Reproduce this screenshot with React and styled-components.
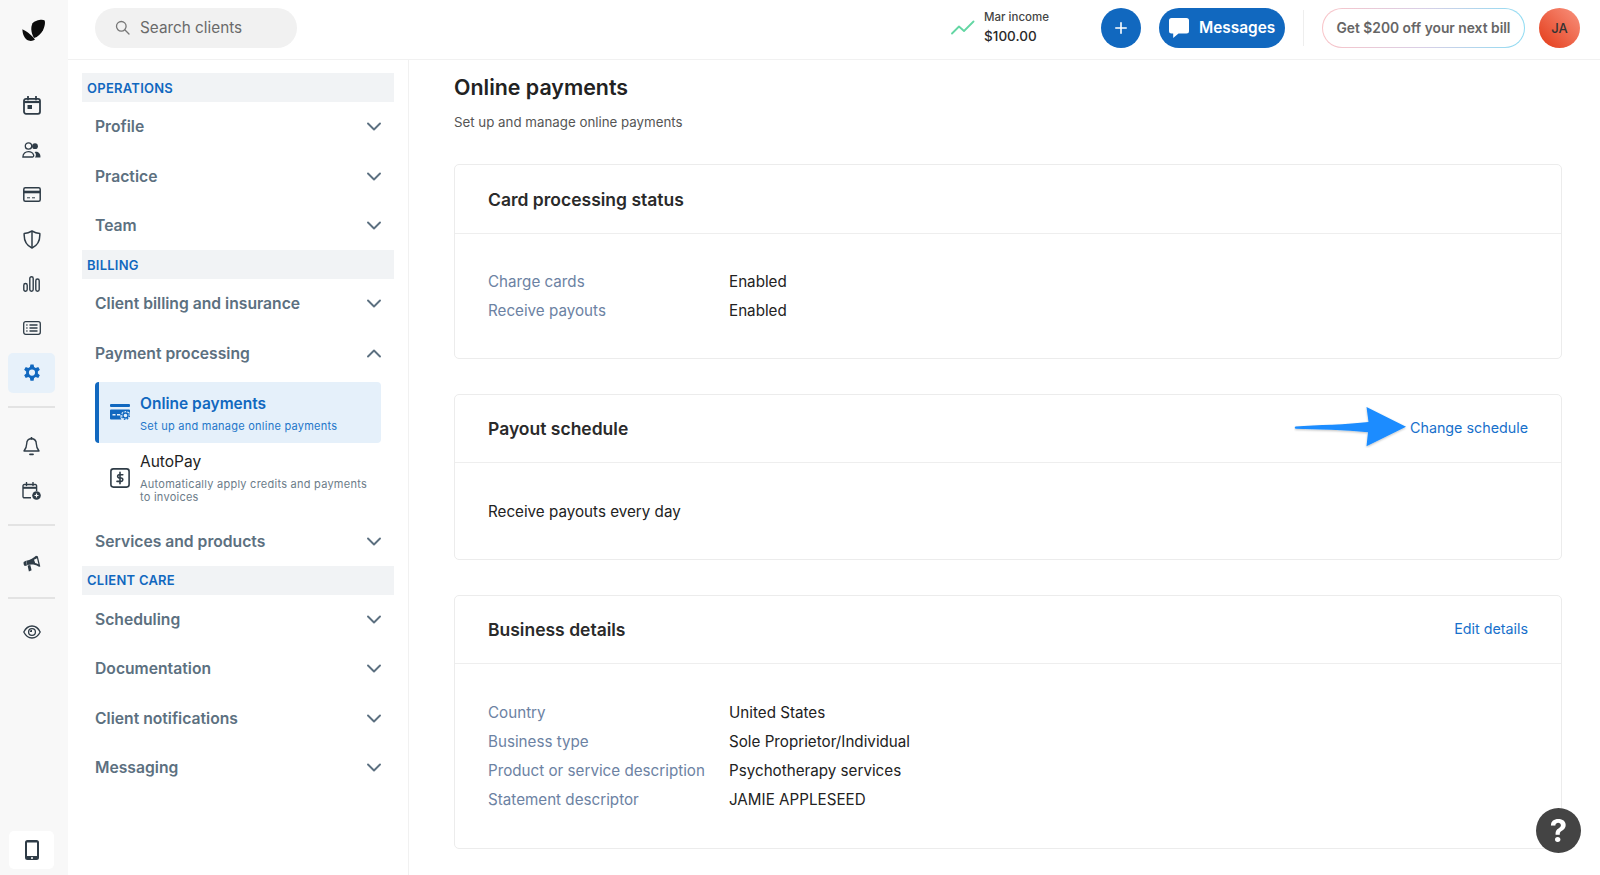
import React from 'react';
import styled, { createGlobalStyle } from 'styled-components';

const GlobalStyle = createGlobalStyle`
  html, body {
    margin: 0;
    height: 100%;
    overflow: hidden;
    background: #fff;
    font-family: Inter, "Liberation Sans", sans-serif;
    color: #222;
  }
  * { box-sizing: border-box; }
`;

const colors = {
  blue: '#1168bf',
  link: '#1770cb',
  slate: '#5c7080',
  label: '#6c82a3',
  ink: '#222222',
};

const Page = styled.div`
  display: flex;
  width: 1600px;
  height: 875px;
  overflow: hidden;
`;

/* left icon rail */
const Rail = styled.aside`
  width: 68px;
  flex: none;
  display: flex;
  flex-direction: column;
  align-items: center;
  background: #f8f8f8;
  color: #2f3c47;
  padding: 0 5px 6px 0;
`;

const LogoBox = styled.div`
  height: 85px;
  width: 100%;
  padding: 18px 0 0 22px;
`;

const RailGroup = styled.div`
  display: flex;
  flex-direction: column;
  gap: 4.7px;
`;

const RailItem = styled.div`
  width: 47px;
  height: 40px;
  border-radius: 5px;
  display: flex;
  align-items: center;
  justify-content: center;
  background: ${(p) => (p.$active ? '#e7f1fa' : 'transparent')};
  color: ${(p) => (p.$active ? colors.blue : 'inherit')};
`;

const RailRule = styled.div`
  width: 47px;
  height: 2px;
  margin: 13px 0 ${(p) => p.$after || 18}px;
  background: #e3e3e3;
`;

const PhoneBox = styled.div`
  margin-top: auto;
  width: 45px;
  height: 38px;
  border-radius: 5px;
  background: #fff;
  display: flex;
  align-items: center;
  justify-content: center;
`;

const Column = styled.div`
  flex: 1;
  min-width: 0;
  display: flex;
  flex-direction: column;
`;

/* top bar */
const TopBar = styled.header`
  height: 60px;
  flex: none;
  display: flex;
  align-items: center;
  padding: 0 20px 4px 27px;
  border-bottom: 1px solid #f1f1f1;
`;

const Search = styled.div`
  width: 202px;
  height: 40px;
  border-radius: 20px;
  background: #f1f1f1;
  display: flex;
  align-items: center;
  gap: 10px;
  padding-left: 20px;
  color: #6a6a6a;
  font-size: 15.3px;
`;

const Income = styled.div`
  margin-left: auto;
  display: flex;
  align-items: center;
  gap: 9px;
  margin-right: 52px;
`;

const IncomeText = styled.div`
  display: flex;
  flex-direction: column;
  gap: 5px;
`;

const IncomeLabel = styled.span`
  font-size: 11.5px;
  font-weight: 500;
  line-height: 13px;
  color: #444;
`;

const IncomeValue = styled.span`
  font-size: 13.5px;
  font-weight: 500;
  line-height: 15px;
  color: #2a2a2a;
`;

const RoundButton = styled.div`
  width: 40px;
  height: 40px;
  border-radius: 50%;
  background: ${colors.blue};
  color: #fff;
  display: flex;
  align-items: center;
  justify-content: center;
  margin-right: 18px;
`;

const MessagesButton = styled.div`
  width: 126px;
  height: 40px;
  border-radius: 20px;
  background: ${colors.blue};
  color: #fff;
  display: flex;
  align-items: center;
  gap: 10px;
  padding-left: 10px;
  font-size: 15.4px;
  font-weight: 600;
`;

const BarRule = styled.div`
  width: 1px;
  height: 36px;
  margin: 0 18px;
  background: #eeeeee;
`;

const Promo = styled.div`
  width: 203px;
  height: 40px;
  border-radius: 20px;
  border: 1.5px solid transparent;
  background:
    linear-gradient(#fff, #fff) padding-box,
    linear-gradient(90deg, #f9c4c8, #d9cfe6, #8fdcf3) border-box;
  display: flex;
  align-items: center;
  justify-content: center;
  font-size: 13.8px;
  font-weight: 600;
  color: #666;
  white-space: nowrap;
`;

const Avatar = styled.div`
  width: 41px;
  height: 40px;
  margin-left: 14px;
  border-radius: 50%;
  background: linear-gradient(45deg, #e33a17, #f9937f);
  display: flex;
  align-items: center;
  justify-content: center;
  font-size: 13px;
  font-weight: 500;
  color: #333;
`;

const Body = styled.div`
  flex: 1;
  min-height: 0;
  display: flex;
`;

/* settings navigation */
const Nav = styled.nav`
  width: 341px;
  flex: none;
  padding: 13px 14px 0;
  border-right: 1px solid #f1f1f1;
`;

const NavHeading = styled.div`
  height: 29px;
  background: #f1f3f5;
  display: flex;
  align-items: center;
  padding-left: 5px;
  font-size: 13px;
  font-weight: 600;
  letter-spacing: 0.25px;
  color: ${colors.blue};
`;

const NavRow = styled.div`
  height: 49.4px;
  display: flex;
  align-items: center;
  justify-content: space-between;
  padding: 0 13px 0 13px;
  font-size: 15.7px;
  font-weight: 600;
  color: ${colors.slate};
`;

const SubList = styled.div`
  margin: 4px 13px 0;
`;

const ActiveItem = styled.div`
  height: 61px;
  border-left: 4px solid ${colors.blue};
  border-radius: 4px;
  background: #e5f0fa;
  display: flex;
  align-items: flex-start;
  padding: 13px 0 0 11px;
  gap: 10px;
  color: ${colors.blue};
`;

const PlainItem = styled.div`
  height: 73.5px;
  display: flex;
  align-items: flex-start;
  padding: 10px 0 0 15px;
  gap: 10px;
`;

const ItemIcon = styled.div`
  width: 20px;
  flex: none;
  margin-top: ${(p) => p.$top}px;
  display: flex;
`;

const ItemText = styled.div`
  display: flex;
  flex-direction: column;
`;

const ItemTitle = styled.span`
  font-size: 15.5px;
  font-weight: ${(p) => (p.$active ? 600 : 400)};
  line-height: 18px;
  color: ${(p) => (p.$active ? colors.blue : colors.ink)};
`;

const ItemDesc = styled.span`
  margin-top: 7px;
  font-size: 11px;
  line-height: 13.5px;
  letter-spacing: 0.25px;
  color: ${(p) => (p.$active ? '#2376c9' : '#6c7c89')};
`;

/* main content */
const Main = styled.main`
  flex: 1;
  min-width: 0;
  padding: 14px 38px 0 45px;
`;

const PageTitle = styled.h1`
  margin: 0;
  font-size: 21.4px;
  font-weight: 600;
  line-height: 26px;
  color: #222;
`;

const PageSub = styled.p`
  margin: 13px 0 32px;
  font-size: 13.3px;
  line-height: 19px;
  color: #555;
`;

const Card = styled.section`
  border: 1px solid #ececec;
  border-radius: 5px;
  margin-bottom: 35px;
`;

const CardHead = styled.div`
  position: relative;
  height: ${(p) => p.$height}px;
  display: flex;
  align-items: center;
  justify-content: space-between;
  padding: 0 33px;
  border-bottom: 1px solid #eeeeee;
`;

const CardTitle = styled.h2`
  margin: 0;
  font-size: 17.5px;
  font-weight: 600;
  color: #2a2a2a;
`;

const CardLink = styled.a`
  margin-bottom: 2px;
  font-size: 14.3px;
  color: ${colors.link};
`;

const CardBody = styled.div`
  padding: ${(p) => p.$top}px 33px 0;
  height: ${(p) => p.$height}px;
  font-size: 15.2px;
  line-height: 29px;
`;

const Field = styled.div`
  display: grid;
  grid-template-columns: 241px 1fr;
`;

const FieldLabel = styled.span`
  color: ${colors.label};
`;

const FieldValue = styled.span`
  color: ${colors.ink};
`;

const Callout = styled.div`
  position: absolute;
  right: 153px;
  top: 11px;
`;

const Help = styled.div`
  position: fixed;
  left: 1536px;
  top: 808px;
  width: 45px;
  height: 45px;
  border-radius: 50%;
  background: #444;
  display: flex;
  align-items: center;
  justify-content: center;
  color: #fff;
  font-size: 31px;
  font-weight: 700;
`;

const Chevron = ({ up }) => (
  <svg width="14" height="9" viewBox="0 0 14 9" fill="none" stroke="#5c7080" strokeWidth="1.9" strokeLinecap="round" strokeLinejoin="round">
    <path d={up ? 'M1 7.5 7 1.5l6 6' : 'M1 1.5l6 6 6-6'} />
  </svg>
);

const Logo = () => (
  <svg width="24" height="24" viewBox="0 0 24 24" fill="#0c0c0c">
    <path d="M12 20C8.800 15 8.600 8.500 10.600 5.200 12.800 2.300 20 .8 22.400 2.200c1.200 1.600.4 6.200-1.400 10-1.900 3.700-5.200 6.700-9 7.800Z" />
    <path d="M.4 11.200c3.200 1.400 9 5.400 12.600 10.400-1.600 1.200-4 1.800-6.400 1C2.800 21.400.4 16 .4 11.200Z" />
  </svg>
);

const CalendarIcon = () => (
  <svg width="18" height="19" viewBox="0 0 18 19" fill="none" stroke="currentColor" strokeWidth="1.8">
    <rect x="1" y="2.800" width="16" height="15" rx="2" />
    <path d="M1 6h16" strokeWidth="2.200" />
    <path d="M5 .6v3M13 .6v3" strokeLinecap="round" />
    <rect x="4.500" y="9" width="4.500" height="4" fill="currentColor" stroke="none" />
  </svg>
);

const UsersIcon = () => (
  <svg width="19" height="16" viewBox="0 0 19 16" fill="none" stroke="currentColor" strokeWidth="1.300">
    <circle cx="6.500" cy="4" r="3.200" />
    <path d="M.9 15c0-3.400 2.500-5.300 5.600-5.300 2.400 0 4.300 1.200 5.100 3.200.4 1-.1 2.100-1 2.100Z" />
    <circle cx="13" cy="4.200" r="2.900" fill="currentColor" stroke="none" />
    <path d="M13 15.500h5.400c.5-3.400-1.700-6-4.800-5.700l-1 .2c1.500 1.500 1.800 3.600.4 5.500Z" fill="currentColor" stroke="none" />
  </svg>
);

const CardIcon = () => (
  <svg width="18" height="15" viewBox="0 0 18 15" fill="none" stroke="currentColor" strokeWidth="1.500">
    <rect x=".8" y=".8" width="16.400" height="13.400" rx="1.500" />
    <path d="M.8 5h16.400" strokeWidth="2.600" />
    <path d="M4 10.800h3M9 10.800h3" strokeWidth="1" />
  </svg>
);

const ShieldIcon = () => (
  <svg width="18" height="19" viewBox="0 0 18 19" fill="none" stroke="currentColor" strokeWidth="1.500" strokeLinejoin="round">
    <path d="M9 1c2.500 1.500 5 2.300 7.800 2.500C17.200 10 14.500 15.500 9 18 3.500 15.500.8 10 1.200 3.500 4 3.300 6.500 2.500 9 1Z" />
    <path d="M9 1v17" />
  </svg>
);

const ChartIcon = () => (
  <svg width="17" height="16" viewBox="0 0 17 16" fill="none" stroke="currentColor" strokeWidth="1.400">
    <rect x=".8" y="7.500" width="3.400" height="7.700" rx="1.700" />
    <rect x="6.800" y=".8" width="3.400" height="14.400" rx="1.700" />
    <rect x="12.800" y="3" width="3.400" height="12.200" rx="1.700" />
  </svg>
);

const ListIcon = () => (
  <svg width="18" height="14" viewBox="0 0 18 14" fill="none" stroke="currentColor" strokeWidth="1.300">
    <rect x=".7" y=".7" width="16.600" height="12.600" rx="2" />
    <path d="M6.500 4h8M6.500 7h8M6.500 10h8" />
    <path d="M3.300 4h1.200M3.300 7h1.200M3.300 10h1.200" />
  </svg>
);

const GearIcon = () => (
  <svg width="20" height="20" viewBox="0 0 24 24" fill="currentColor">
    <path fillRule="evenodd" d="M13.900 1h-3.800l-.6 3.100a8.300 8.300 0 0 0-2 1.200L4.500 4.200 2.600 7.500 5 9.600a8.300 8.300 0 0 0 0 2.300l-2.400 2.100 1.900 3.300 3-1.100a8.300 8.300 0 0 0 2 1.200l.6 3.100h3.800l.6-3.100a8.300 8.300 0 0 0 2-1.200l3 1.100 1.900-3.300-2.400-2.100a8.300 8.300 0 0 0 0-2.300l2.400-2.100-1.900-3.300-3 1.100a8.300 8.300 0 0 0-2-1.200L13.900 1ZM12 14.500a3.700 3.700 0 1 0 0-7.400 3.700 3.700 0 0 0 0 7.400Z" transform="translate(0 .7)" />
  </svg>
);

const BellIcon = () => (
  <svg width="17" height="19" viewBox="0 0 17 19" fill="none" stroke="currentColor" strokeWidth="1.400" strokeLinecap="round" strokeLinejoin="round">
    <path d="M8.500 1.800c-3 0-4.800 2.200-4.800 5 0 3.500-1 5-2.700 7.200h15c-1.700-2.200-2.700-3.700-2.700-7.200 0-2.800-1.800-5-4.800-5Z" />
    <path d="M8.500.8v1M7 17.300h3" strokeWidth="1.800" />
  </svg>
);

const CalendarPlusIcon = () => (
  <svg width="19" height="18" viewBox="0 0 19 18" fill="none" stroke="currentColor" strokeWidth="1.400">
    <path d="M9 15.800H2.300A1.300 1.300 0 0 1 1 14.500V3.800a1.300 1.300 0 0 1 1.300-1.300h11a1.300 1.300 0 0 1 1.300 1.300V9" />
    <path d="M1 5.800h13.600" strokeWidth="2" />
    <path d="M4.500.5v3M11 .5v3" strokeLinecap="round" />
    <circle cx="14.500" cy="13.500" r="4.300" fill="currentColor" stroke="none" />
    <path d="M14.500 11.500v4M12.500 13.500h4" stroke="#f8f8f8" strokeWidth="1.200" />
  </svg>
);

const MegaphoneIcon = () => (
  <svg width="18" height="18" viewBox="0 0 18 18" fill="currentColor">
    <path d="M14.800 1.200 13 .8C10.800 3 7.300 5 3.200 5.800l1 4.300c4-.9 8-.6 11.200 1.300l1 .4.900-.3-2.500-10.300Zm-.8 2 1.400 6c-1-.6-2.100-1-3.200-1.200L11 4.700c1-.4 2.100-.9 3-1.500Z" />
    <path d="M.6 7 3 5.800l1 4.600-2.300.5C.9 10.500.3 8.500.6 7Z" />
    <path d="M4.600 10.400 7.300 10l1.300 5.200-2.700 1.300-1.300-6.100Z" />
  </svg>
);

const EyeIcon = () => (
  <svg width="18" height="14" viewBox="0 0 18 14" fill="none" stroke="currentColor" strokeWidth="1.300">
    <path d="M.8 7C2.700 3.200 5.600 1 9 1s6.300 2.200 8.200 6c-1.900 3.800-4.800 6-8.200 6S2.700 10.800.8 7Z" />
    <circle cx="9" cy="7" r="3.400" />
    <path d="M9 7V4.800A2.200 2.200 0 0 0 6.800 7Z" fill="currentColor" stroke="none" />
  </svg>
);

const PhoneIcon = () => (
  <svg width="14" height="20" viewBox="0 0 14 20" fill="#2f3c47">
    <path fillRule="evenodd" d="M2.500 0h9A2.500 2.500 0 0 1 14 2.500v15a2.500 2.500 0 0 1-2.500 2.500h-9A2.500 2.500 0 0 1 0 17.500v-15A2.500 2.500 0 0 1 2.500 0ZM2 2.500V16h10V2.500H2ZM7 17a1 1 0 1 0 0 2 1 1 0 0 0 0-2Z" />
  </svg>
);

const SearchIcon = () => (
  <svg width="15" height="15" viewBox="0 0 15 15" fill="none" stroke="#777" strokeWidth="1.300" strokeLinecap="round">
    <circle cx="6.300" cy="6.300" r="4.800" />
    <path d="M10 10l4 4" />
  </svg>
);

const TrendIcon = () => (
  <svg width="24" height="15" viewBox="0 0 24 15" fill="none" stroke="#63d6a3" strokeWidth="1.800" strokeLinejoin="round" strokeLinecap="round">
    <path d="M1 13.500l7-7 5 4.500L22.500 1.500" />
  </svg>
);

const PlusIcon = () => (
  <svg width="12" height="12" viewBox="0 0 12 12" stroke="#fff" strokeWidth="1.600" strokeLinecap="round">
    <path d="M6 .8v10.400M.8 6h10.400" />
  </svg>
);

const BubbleIcon = () => (
  <svg width="20" height="20" viewBox="0 0 20 20" fill="#fff">
    <path d="M2.500 0h15A2.500 2.500 0 0 1 20 2.500v10.500a2.500 2.500 0 0 1-2.500 2.500H9.500L4.200 20v-4.500H2.500A2.500 2.500 0 0 1 0 13V2.500A2.500 2.500 0 0 1 2.500 0Z" />
  </svg>
);

const CardGearIcon = () => (
  <svg width="20" height="16" viewBox="0 0 20 16" fill="currentColor">
    <rect x="0" y="0" width="20" height="3" rx="1" />
    <path d="M1 5.500h18a1 1 0 0 1 1 1V9a5 5 0 0 0-8.500 6.500H1a1 1 0 0 1-1-1v-8a1 1 0 0 1 1-1Z" />
    <rect x="2.500" y="10" width="3" height="1.500" fill="#e5f0fa" />
    <rect x="7" y="10" width="3" height="1.500" fill="#e5f0fa" />
    <circle cx="15.500" cy="11.500" r="2.500" fill="none" stroke="currentColor" strokeWidth="1.400" />
    <circle cx="15.500" cy="11.500" r="3.900" fill="none" stroke="currentColor" strokeWidth="1.300" strokeDasharray="1.600 1.460" />
  </svg>
);

const DollarIcon = () => (
  <svg width="20" height="20" viewBox="0 0 20 20" fill="none" stroke="#2f3c47" strokeWidth="1.600" strokeLinecap="round">
    <rect x=".9" y=".9" width="18.200" height="18.200" rx="2.500" />
    <path d="M10 4.200v11.600M12.800 6.700H8.900a1.700 1.700 0 0 0 0 3.300h2.200a1.700 1.700 0 0 1 0 3.400H7" strokeWidth="1.600" />
  </svg>
);

const Arrow = () => (
  <svg width="114" height="42" viewBox="0 0 114 42" fill="#1a8cff">
    <defs>
      <filter id="arrowShade" x="-5%" y="-10%" width="110%" height="130%">
        <feDropShadow dx="0" dy="1" stdDeviation="0.800" floodColor="#000" floodOpacity="0.250" />
      </filter>
    </defs>
    <path filter="url(#arrowShade)" d="M1.500 20.500c-1.200.8-.8 2.300.5 2.300 20 .8 50 1 72 3.500l-1.500 14 39.500-19.500L72.500 1l2 15c-20 2.500-52 3-73 4.500Z" />
  </svg>
);

const mainIcons = [<CalendarIcon />, <UsersIcon />, <CardIcon />, <ShieldIcon />, <ChartIcon />, <ListIcon />];

const NavItem = ({ label, up }) => (
  <NavRow>
    {label}
    <Chevron up={up} />
  </NavRow>
);

const FieldRow = ({ label, value }) => (
  <Field>
    <FieldLabel>{label}</FieldLabel>
    <FieldValue>{value}</FieldValue>
  </Field>
);

const App = () => (
  <Page>
    <GlobalStyle />
    <Rail>
      <LogoBox><Logo /></LogoBox>
      <RailGroup>
        {mainIcons.map((icon, i) => <RailItem key={i}>{icon}</RailItem>)}
        <RailItem $active><GearIcon /></RailItem>
      </RailGroup>
      <RailRule />
      <RailGroup>
        <RailItem><BellIcon /></RailItem>
        <RailItem><CalendarPlusIcon /></RailItem>
      </RailGroup>
      <RailRule />
      <RailGroup>
        <RailItem><MegaphoneIcon /></RailItem>
      </RailGroup>
      <RailRule $after={13} />
      <RailGroup>
        <RailItem><EyeIcon /></RailItem>
      </RailGroup>
      <PhoneBox><PhoneIcon /></PhoneBox>
    </Rail>
    <Column>
      <TopBar>
        <Search>
          <SearchIcon />
          Search clients
        </Search>
        <Income>
          <TrendIcon />
          <IncomeText>
            <IncomeLabel>Mar income</IncomeLabel>
            <IncomeValue>$100.00</IncomeValue>
          </IncomeText>
        </Income>
        <RoundButton><PlusIcon /></RoundButton>
        <MessagesButton>
          <BubbleIcon />
          Messages
        </MessagesButton>
        <BarRule />
        <Promo>Get $200 off your next bill</Promo>
        <Avatar>JA</Avatar>
      </TopBar>
      <Body>
        <Nav>
          <NavHeading>OPERATIONS</NavHeading>
          <NavItem label="Profile" />
          <NavItem label="Practice" />
          <NavItem label="Team" />
          <NavHeading>BILLING</NavHeading>
          <NavItem label="Client billing and insurance" />
          <NavItem label="Payment processing" up />
          <SubList>
            <ActiveItem>
              <ItemIcon $top={9}><CardGearIcon /></ItemIcon>
              <ItemText>
                <ItemTitle $active>Online payments</ItemTitle>
                <ItemDesc $active>Set up and manage online payments</ItemDesc>
              </ItemText>
            </ActiveItem>
            <PlainItem>
              <ItemIcon $top={15}><DollarIcon /></ItemIcon>
              <ItemText>
                <ItemTitle>AutoPay</ItemTitle>
                <ItemDesc>Automatically apply credits and payments<br />to invoices</ItemDesc>
              </ItemText>
            </PlainItem>
          </SubList>
          <NavItem label="Services and products" />
          <NavHeading>CLIENT CARE</NavHeading>
          <NavItem label="Scheduling" />
          <NavItem label="Documentation" />
          <NavItem label="Client notifications" />
          <NavItem label="Messaging" />
        </Nav>
        <Main>
          <PageTitle>Online payments</PageTitle>
          <PageSub>Set up and manage online payments</PageSub>
          <Card>
            <CardHead $height={69}>
              <CardTitle>Card processing status</CardTitle>
            </CardHead>
            <CardBody $top={33} $height={124}>
              <FieldRow label="Charge cards" value="Enabled" />
              <FieldRow label="Receive payouts" value="Enabled" />
            </CardBody>
          </Card>
          <Card>
            <CardHead $height={68}>
              <CardTitle>Payout schedule</CardTitle>
              <CardLink>Change schedule</CardLink>
              <Callout><Arrow /></Callout>
            </CardHead>
            <CardBody $top={34} $height={96}>Receive payouts every day</CardBody>
          </Card>
          <Card>
            <CardHead $height={68}>
              <CardTitle>Business details</CardTitle>
              <CardLink>Edit details</CardLink>
            </CardHead>
            <CardBody $top={34} $height={184}>
              <FieldRow label="Country" value="United States" />
              <FieldRow label="Business type" value="Sole Proprietor/Individual" />
              <FieldRow label="Product or service description" value="Psychotherapy services" />
              <FieldRow label="Statement descriptor" value="JAMIE APPLESEED" />
            </CardBody>
          </Card>
        </Main>
      </Body>
    </Column>
    <Help>?</Help>
  </Page>
);

export default App;
